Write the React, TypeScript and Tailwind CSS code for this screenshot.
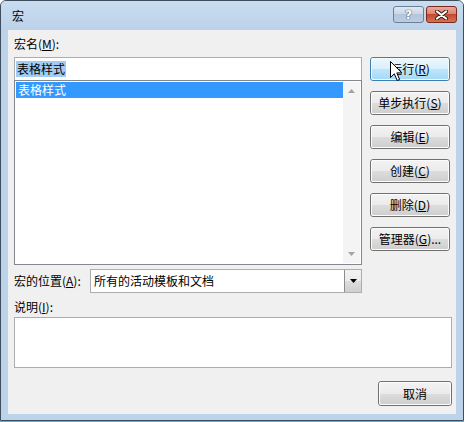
import React from "react";

const font = { fontFamily: '"Noto Sans CJK SC", "Microsoft YaHei", sans-serif' };

function WinButton({
  children,
  hot = false,
  className = "",
}: {
  children: React.ReactNode;
  hot?: boolean;
  className?: string;
}) {
  return (
    <div
      className={`relative flex items-center justify-center rounded-[3px] border text-[12px] leading-none text-black ${
        hot ? "border-[#3c7fb1]" : "border-[#707070]"
      } ${className}`}
    >
      <div
        className={`absolute inset-0 rounded-[2px] border ${
          hot
            ? "border-[#f4fbff] bg-[linear-gradient(#eaf6fd_0%,#d9f0fc_50%,#bee6fd_50%,#a7d9f5_100%)]"
            : "border-[#fcfcfc] bg-[linear-gradient(#f2f2f2_0%,#ebebeb_50%,#dddddd_50%,#cfcfcf_100%)]"
        }`}
      />
      <span className="relative">{children}</span>
    </div>
  );
}

function Cursor() {
  return (
    <svg className="absolute left-[390px] top-[61px]" width="13" height="21" viewBox="0 0 13 21">
      <path
        d="M0.5 0.5 L0.5 16.5 L4.3 12.8 L7.2 19.5 L9.6 18.5 L6.8 11.9 L11.8 11.9 Z"
        fill="#fff"
        stroke="#000"
        strokeWidth="1"
        strokeLinejoin="miter"
      />
    </svg>
  );
}

export default function App() {
  const buttons = [
    <>单步执行(<u>S</u>)</>,
    <>编辑(<u>E</u>)</>,
    <>创建(<u>C</u>)</>,
    <>删除(<u>D</u>)</>,
    <>管理器(<u>G</u>)...</>,
  ];

  return (
    <div className="relative h-[422px] w-[466px] overflow-hidden bg-white" style={font}>
      <div className="flex h-[421px] w-[464px] flex-col rounded-t-[6px] border border-[#3e4d5e] bg-[#bdd3ea]">
        {/* title bar */}
        <div className="flex h-[29px] shrink-0 items-center rounded-t-[5px] bg-[linear-gradient(#c9dcf0,#bcd2ea)] pl-[11px] pr-[6px]">
          <span className="text-[12px] text-black">宏</span>
          <div className="ml-auto mt-[-2px] flex gap-[2px]">
            <div className="flex h-[17px] w-[31px] items-center justify-center rounded-[3px] border border-[#6b7f96] bg-[linear-gradient(#dfe8f2_0%,#c7d6e6_50%,#b3c6dc_50%,#bccde1_100%)]">
              <span
                className="text-[13px] font-bold leading-none text-white"
                style={{ fontFamily: '"DejaVu Sans", sans-serif', textShadow: "0 0 1px #2c3f55, 0 0 1px #2c3f55" }}
              >
                ?
              </span>
            </div>
            <div className="flex h-[17px] w-[31px] items-center justify-center rounded-[3px] border border-[#7a2a1c] bg-[linear-gradient(#e9a99a_0%,#d9826d_50%,#c4492e_50%,#d2735a_100%)]">
              <svg width="13" height="10" viewBox="0 0 13 10">
                <path d="M2 1.5 L11 8.5 M11 1.5 L2 8.5" stroke="#3b1a12" strokeWidth="4" strokeLinecap="round" />
                <path d="M2 1.5 L11 8.5 M11 1.5 L2 8.5" stroke="#fff" strokeWidth="2.2" strokeLinecap="round" />
              </svg>
            </div>
          </div>
        </div>

        {/* client area */}
        <div className="mx-[7px] flex h-[384px] shrink-0 flex-col bg-[#f0f0f0] px-[6px] pt-[6px] text-[12px] text-black">
          <div className="flex gap-[8px]">
            {/* left column */}
            <div className="flex w-[349px] flex-col">
              <div className="h-[16px] leading-[16px]">
                宏名(<u>M</u>):
              </div>
              <div className="mt-[5px] flex h-[23px] items-center border border-[#abadb3] border-b-0 bg-white pl-[1px]">
                <span className="bg-[#a3ccf4] px-[1px] leading-[16px]">表格样式</span>
              </div>
              <div className="flex h-[185px] border border-[#828790] bg-white p-[1px]">
                <div className="flex-1">
                  <div className="h-[16px] bg-[#3399ff] pl-[2px] leading-[16px] text-white">表格样式</div>
                </div>
                <div className="flex w-[17px] flex-col items-center justify-between bg-[#f4f4f4] py-[7px]">
                  <svg width="7" height="4" viewBox="0 0 7 4">
                    <path d="M0 4 L3.5 0 L7 4 Z" fill="#a3a3a3" />
                  </svg>
                  <svg width="7" height="4" viewBox="0 0 7 4">
                    <path d="M0 0 L3.5 4 L7 0 Z" fill="#a3a3a3" />
                  </svg>
                </div>
              </div>
              <div className="mt-[4px] flex h-[24px] items-center">
                <div className="w-[76px]">
                  宏的位置(<u>A</u>):
                </div>
                <div className="flex h-[24px] flex-1 items-center border border-[#abadb3] bg-white">
                  <span className="flex-1 pl-[3px]">所有的活动模板和文档</span>
                  <div className="flex h-full w-[17px] items-center justify-center border-l border-[#8d8d8d] bg-[linear-gradient(#f2f2f2_0%,#ebebeb_50%,#dddddd_50%,#cfcfcf_100%)]">
                    <svg width="7" height="4" viewBox="0 0 7 4">
                      <path d="M0 0 L3.5 4 L7 0 Z" fill="#000" />
                    </svg>
                  </div>
                </div>
              </div>
            </div>

            {/* right column */}
            <div className="flex flex-col gap-[10px] pt-[21px]">
              <WinButton hot className="h-[24px] w-[80px]">
                运行(<u>R</u>)
              </WinButton>
              {buttons.map((b, i) => (
                <WinButton key={i} className="h-[24px] w-[80px]">
                  {b}
                </WinButton>
              ))}
            </div>
          </div>

          <div className="mt-[6px] h-[16px] leading-[16px]">
            说明(<u>I</u>):
          </div>
          <div className="mt-[2px] h-[51px] w-[438px] border border-[#abadb3] bg-white" />
          <div className="mt-[13px] flex w-[438px] justify-end">
            <WinButton className="h-[25px] w-[74px]">取消</WinButton>
          </div>
        </div>
      </div>
      <div className="h-[1px] w-[464px] bg-[#2fc4e0]" />
      <Cursor />
    </div>
  );
}
